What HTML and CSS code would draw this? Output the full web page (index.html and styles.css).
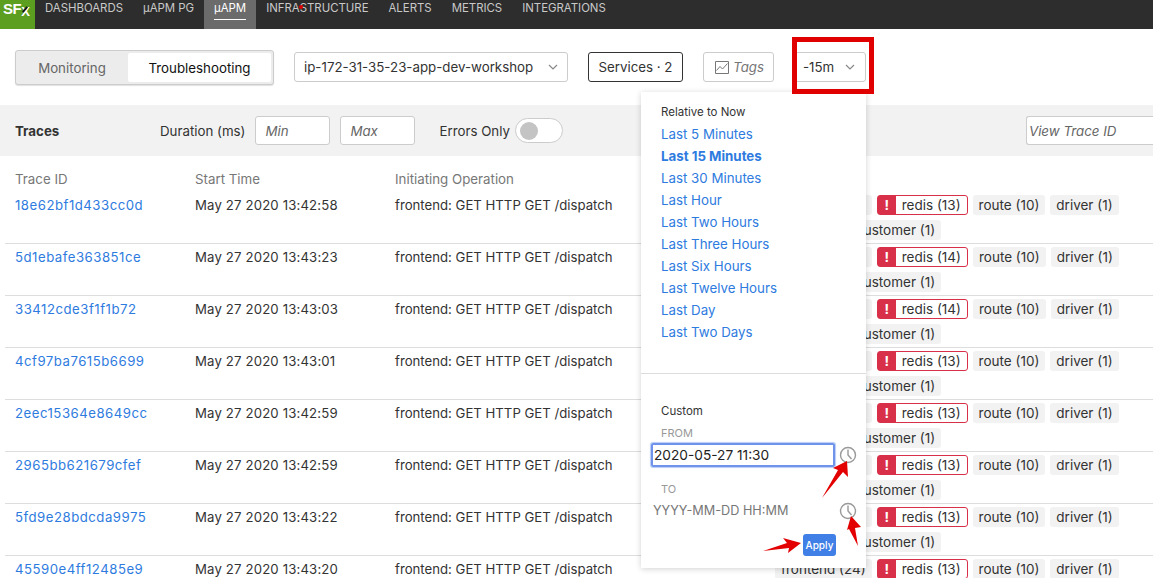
FILE: index.html
```html
<!DOCTYPE html>
<html lang="en">
<head>
<meta charset="UTF-8">
<meta name="viewport" content="width=device-width, initial-scale=1.0">
<title>Traces</title>
<link rel="stylesheet" href="styles.css">
</head>
<body>

<nav class="topnav">
    <div class="logo">SF<span class="logo-x">X</span></div>
    <a class="nav-item">DASHBOARDS</a>
    <a class="nav-item">µAPM PG</a>
    <a class="nav-item active"><span>µAPM</span></a>
    <a class="nav-item">INFRASTRUCTURE</a>
    <a class="nav-item">ALERTS</a>
    <a class="nav-item">METRICS</a>
    <a class="nav-item">INTEGRATIONS</a>
</nav>

<div class="toolbar">
    <div class="segment">
        <div class="segment-item">Monitoring</div>
        <div class="segment-item selected">Troubleshooting</div>
    </div>
    <div class="tool-btn env-select">
        <span>ip-172-31-35-23-app-dev-workshop</span>
        <svg class="chevron" viewBox="0 0 10 6"><path d="M1 1l4 4 4-4"/></svg>
    </div>
    <div class="tool-btn services">Services · 2</div>
    <div class="tool-btn tags">
        <svg class="tags-icon" viewBox="0 0 14 13"><path d="M.5.5h13v12H.5z"/><path d="M1.500 9.500l3.500-4 2.500 2.500 5-5.500"/></svg>
        <em>Tags</em>
    </div>
    <div class="tool-btn time">
        <span>-15m</span>
        <svg class="chevron" viewBox="0 0 10 6"><path d="M1 1l4 4 4-4"/></svg>
    </div>
</div>

<div class="filterbar">
    <strong class="filter-title">Traces</strong>
    <span class="filter-label">Duration (ms)</span>
    <div class="filter-input">Min</div>
    <div class="filter-input">Max</div>
    <span class="filter-label errors">Errors Only</span>
    <div class="toggle"><div class="toggle-knob"></div></div>
    <div class="filter-input trace-search">View Trace ID</div>
</div>

<div class="traces">
    <div class="trace-head">
        <div>Trace ID</div>
        <div>Start Time</div>
        <div>Initiating Operation</div>
    </div>

    <div class="trace-row">
        <a class="trace-id">18e62bf1d433cc0d</a>
        <div class="start-time">May 27 2020 13:42:58</div>
        <div>frontend: GET HTTP GET /dispatch</div>
        <div class="tag-list">
            <span class="tag">frontend (24)</span>
            <span class="tag error"><b>!</b>redis (13)</span>
            <span class="tag">route (10)</span>
            <span class="tag">driver (1)</span>
            <span class="tag blank"></span>
            <span class="tag">customer (1)</span>
        </div>
    </div>
    <div class="trace-row">
        <a class="trace-id">5d1ebafe363851ce</a>
        <div class="start-time">May 27 2020 13:43:23</div>
        <div>frontend: GET HTTP GET /dispatch</div>
        <div class="tag-list">
            <span class="tag">frontend (24)</span>
            <span class="tag error"><b>!</b>redis (14)</span>
            <span class="tag">route (10)</span>
            <span class="tag">driver (1)</span>
            <span class="tag blank"></span>
            <span class="tag">customer (1)</span>
        </div>
    </div>
    <div class="trace-row">
        <a class="trace-id">33412cde3f1f1b72</a>
        <div class="start-time">May 27 2020 13:43:03</div>
        <div>frontend: GET HTTP GET /dispatch</div>
        <div class="tag-list">
            <span class="tag">frontend (24)</span>
            <span class="tag error"><b>!</b>redis (14)</span>
            <span class="tag">route (10)</span>
            <span class="tag">driver (1)</span>
            <span class="tag blank"></span>
            <span class="tag">customer (1)</span>
        </div>
    </div>
    <div class="trace-row">
        <a class="trace-id">4cf97ba7615b6699</a>
        <div class="start-time">May 27 2020 13:43:01</div>
        <div>frontend: GET HTTP GET /dispatch</div>
        <div class="tag-list">
            <span class="tag">frontend (24)</span>
            <span class="tag error"><b>!</b>redis (13)</span>
            <span class="tag">route (10)</span>
            <span class="tag">driver (1)</span>
            <span class="tag blank"></span>
            <span class="tag">customer (1)</span>
        </div>
    </div>
    <div class="trace-row">
        <a class="trace-id">2eec15364e8649cc</a>
        <div class="start-time">May 27 2020 13:42:59</div>
        <div>frontend: GET HTTP GET /dispatch</div>
        <div class="tag-list">
            <span class="tag">frontend (24)</span>
            <span class="tag error"><b>!</b>redis (13)</span>
            <span class="tag">route (10)</span>
            <span class="tag">driver (1)</span>
            <span class="tag blank"></span>
            <span class="tag">customer (1)</span>
        </div>
    </div>
    <div class="trace-row">
        <a class="trace-id">2965bb621679cfef</a>
        <div class="start-time">May 27 2020 13:42:59</div>
        <div>frontend: GET HTTP GET /dispatch</div>
        <div class="tag-list">
            <span class="tag">frontend (24)</span>
            <span class="tag error"><b>!</b>redis (13)</span>
            <span class="tag">route (10)</span>
            <span class="tag">driver (1)</span>
            <span class="tag blank"></span>
            <span class="tag">customer (1)</span>
        </div>
    </div>
    <div class="trace-row">
        <a class="trace-id">5fd9e28bdcda9975</a>
        <div class="start-time">May 27 2020 13:43:22</div>
        <div>frontend: GET HTTP GET /dispatch</div>
        <div class="tag-list">
            <span class="tag">frontend (24)</span>
            <span class="tag error"><b>!</b>redis (13)</span>
            <span class="tag">route (10)</span>
            <span class="tag">driver (1)</span>
            <span class="tag blank"></span>
            <span class="tag">customer (1)</span>
        </div>
    </div>
    <div class="trace-row">
        <a class="trace-id">45590e4ff12485e9</a>
        <div class="start-time">May 27 2020 13:43:20</div>
        <div>frontend: GET HTTP GET /dispatch</div>
        <div class="tag-list">
            <span class="tag">frontend (24)</span>
            <span class="tag error"><b>!</b>redis (13)</span>
            <span class="tag">route (10)</span>
            <span class="tag">driver (1)</span>
        </div>
    </div>
</div>

<!-- time picker dropdown -->
<div class="time-menu">
    <div class="menu-relative">
        <div class="menu-title">Relative to Now</div>
        <a class="menu-link">Last 5 Minutes</a>
        <a class="menu-link current">Last 15 Minutes</a>
        <a class="menu-link">Last 30 Minutes</a>
        <a class="menu-link">Last Hour</a>
        <a class="menu-link">Last Two Hours</a>
        <a class="menu-link">Last Three Hours</a>
        <a class="menu-link">Last Six Hours</a>
        <a class="menu-link">Last Twelve Hours</a>
        <a class="menu-link">Last Day</a>
        <a class="menu-link">Last Two Days</a>
    </div>
    <div class="menu-custom">
        <div class="menu-title">Custom</div>
        <div class="field-label">FROM</div>
        <div class="field-row">
            <div class="date-input focused">2020-05-27 11:30</div>
            <svg class="clock" viewBox="0 0 18 18"><circle cx="9" cy="9" r="7.500"/><path d="M9 3.500V9l3.500 4"/></svg>
        </div>
        <div class="field-label to">TO</div>
        <div class="field-row">
            <div class="date-input empty">YYYY-MM-DD HH:MM</div>
            <svg class="clock" viewBox="0 0 18 18"><circle cx="9" cy="9" r="7.500"/><path d="M9 3.500V9l3.500 4"/></svg>
        </div>
        <div class="apply-row"><button class="apply">Apply</button></div>
    </div>
</div>

<!-- screenshot annotations -->
<div class="callout"></div>
<div class="cursor-dot"></div>
<svg class="arrows" viewBox="0 0 1153 578">
    <path d="M822 498L838 470 833 468 847 461 848 477 843 472z"/>
    <path d="M858 546L849 529 847 530 851 516 861 527 855 528z"/>
    <path d="M763 551L787 543 783 538 801 543 788 553 789 548z"/>
</svg>

</body>
</html>
```

FILE: styles.css
```css
html, body {
    height: 100%;
}

body {
    display: flex;
    flex-direction: column;
    margin: 0;
    overflow: hidden;
    background-color: #fff;
    color: #333;
    font-family: Inter, "Liberation Sans", sans-serif;
    font-size: 13.3px;
}

.topnav {
    display: flex;
    flex: none;
    height: 29px;
    background-color: #2d2d2d;
}

.logo {
    position: relative;
    width: 35px;
    height: 29px;
    padding-left: 3px;
    box-sizing: border-box;
    background-color: #5b9e20;
    color: #fff;
    font-family: "Liberation Sans", sans-serif;
    font-size: 15px;
    font-weight: 700;
    line-height: 18px;
    letter-spacing: -0.5px;
}

/* the black stroke of the X */
.logo::after {
    content: "";
    position: absolute;
    top: 6px;
    left: 24px;
    width: 2px;
    height: 7px;
    background-color: #1a1a1a;
    transform: rotate(40deg);
}

.logo-x {
    position: relative;
    top: 2px;
    font-size: 13px;
}

.nav-item {
    padding: 0 10px;
    color: #c9c9c9;
    font-size: 11.4px;
    line-height: 16px;
}

.nav-item.active {
    background-color: #6b6b6b;
    color: #fff;
}

.nav-item.active span {
    display: block;
    height: 19px;
    border-bottom: 1px solid #fff;
}

.toolbar {
    display: flex;
    flex: none;
    align-items: center;
    height: 76px;
    padding: 0 0 0 15px;
    box-sizing: border-box;
}

.segment {
    display: flex;
    width: 259px;
    height: 35px;
    padding: 2px 2px 2px 3px;
    box-sizing: border-box;
    border: 1px solid #ccc;
    border-radius: 3px;
    background-color: #ececec;
    box-shadow: 0 1px 1px rgba(0, 0, 0, 0.12);
}

.segment-item {
    display: flex;
    align-items: center;
    justify-content: center;
    width: 109px;
    padding: 1px 3px 0 0;
    box-sizing: border-box;
    color: #666;
}

.segment-item.selected {
    flex: 1;
    padding-right: 0;
    background-color: #fff;
    border-radius: 2px;
    color: #111;
}

.tool-btn {
    display: flex;
    align-items: center;
    flex: none;
    height: 30px;
    margin-left: 20px;
    box-sizing: border-box;
    border: 1px solid #ccc;
    border-radius: 3px;
}

.env-select {
    justify-content: space-between;
    width: 274px;
    padding: 0 9px;
}

.services {
    justify-content: center;
    width: 95px;
    border-color: #333;
}

.tags {
    justify-content: flex-end;
    width: 71px;
    padding-right: 9px;
    color: #777;
}

.tags-icon {
    width: 14px;
    height: 13px;
    margin-right: 4px;
    fill: none;
    stroke: #777;
    stroke-width: 1;
}

.time {
    justify-content: space-between;
    width: 72px;
    padding: 0 10px 0 8px;
}

.chevron {
    width: 10px;
    height: 6px;
    fill: none;
    stroke: #888;
    stroke-width: 1.2;
}

.filterbar {
    display: flex;
    flex: none;
    align-items: center;
    height: 51px;
    padding-left: 15px;
    background-color: #f2f2f2;
}

.filter-title {
    width: 145px;
    color: #333;
}

.filter-input {
    flex: none;
    width: 75px;
    height: 29px;
    margin-left: 10px;
    padding-left: 9px;
    box-sizing: border-box;
    border: 1px solid #ccc;
    border-radius: 3px;
    background-color: #fff;
    color: #666;
    font-style: italic;
    line-height: 28px;
}

.filter-label {
    color: #333;
}

.errors {
    margin-left: 24px;
}

.toggle {
    width: 48px;
    height: 25px;
    margin-left: 5px;
    padding: 3px 4px;
    box-sizing: border-box;
    border: 1px solid #ccc;
    border-radius: 13px;
    background-color: #fff;
}

.toggle-knob {
    width: 18px;
    height: 18px;
    border-radius: 50%;
    background-color: #c4c4c4;
}

.trace-search {
    flex: 1;
    margin-left: 463px;
    padding-left: 2px;
    border-right: 0;
    border-radius: 3px 0 0 3px;
}

.traces {
    flex: 1;
    min-height: 0;
    overflow: hidden;
    padding-left: 5px;
}

.trace-head,
.trace-row {
    display: grid;
    grid-template-columns: 180px 200px 380px 1fr;
    padding-left: 10px;
}

.trace-head {
    height: 36px;
    align-items: center;
    padding-top: 10px;
    box-sizing: border-box;
    color: #777;
}

.trace-row {
    height: 52px;
    padding-top: 3px;
    box-sizing: border-box;
    border-bottom: 1px solid #ddd;
    font-size: 13.2px;
    line-height: 20px;
}

.trace-id {
    color: #2e7be0;
    letter-spacing: 0.5px;
}

.start-time {
    letter-spacing: 0.15px;
}

.tag-list {
    display: flex;
    flex-wrap: wrap;
    align-content: flex-start;
    gap: 5px;
    font-size: 13.5px;
}

.tag {
    display: flex;
    height: 20px;
    padding: 0 6px;
    box-sizing: border-box;
    border-radius: 3px;
    background-color: #f2f2f2;
    white-space: nowrap;
}

.tag.blank {
    width: 70px;
    background-color: transparent;
}

.tag.error {
    padding: 0 6px 0 0;
    border: 1px solid #d9304a;
    background-color: #fff;
    line-height: 18px;
}

.tag.error b {
    width: 18px;
    margin-right: 6px;
    background-color: #d9304a;
    color: #fff;
    text-align: center;
}

.time-menu {
    position: absolute;
    top: 92px;
    left: 641px;
    width: 225px;
    height: 476px;
    background-color: #fff;
    box-shadow: 0 1px 6px rgba(0, 0, 0, 0.18);
}

.menu-relative {
    height: 282px;
    padding: 11px 20px 0;
    box-sizing: border-box;
    border-bottom: 1px solid #ddd;
}

.menu-title {
    font-size: 11.5px;
    line-height: 18px;
}

.menu-link {
    display: block;
    color: #2e7be0;
    line-height: 22px;
}

.menu-link.current {
    font-weight: 700;
}

.menu-relative .menu-title {
    margin-bottom: 2px;
}

.menu-custom {
    padding-top: 28px;
}

.menu-custom .menu-title {
    margin-left: 20px;
}

.field-label {
    margin: 6px 0 0 20px;
    color: #999;
    font-size: 11px;
    line-height: 14px;
}

.field-label.to {
    margin-top: 15px;
}

.field-row {
    display: flex;
    align-items: center;
    margin-top: 3px;
    padding-left: 10px;
}

.date-input {
    width: 184px;
    height: 24px;
    padding-left: 2px;
    box-sizing: border-box;
    font-size: 12.7px;
    line-height: 24px;
}

.date-input.focused {
    border: 2px solid #6f92ea;
    border-radius: 2px;
    padding-left: 1px;
    box-shadow: 0 0 1px 1px #b9cdf6;
    color: #222;
    font-size: 13.7px;
    line-height: 20px;
}

.date-input.empty {
    color: #777;
}

.clock {
    width: 18px;
    height: 18px;
    margin-left: 4px;
    fill: none;
    stroke: #999;
    stroke-width: 1.4;
}

.apply-row {
    display: flex;
    justify-content: flex-end;
    margin: 11px 30px 0 0;
}

.apply {
    width: 33px;
    height: 22px;
    padding: 0;
    border: 0;
    border-radius: 3px;
    background-color: #3f7fe6;
    color: #fff;
    font-family: inherit;
    font-size: 10px;
    font-weight: 500;
}

.callout {
    position: absolute;
    top: 37px;
    left: 792px;
    width: 82px;
    height: 57px;
    box-sizing: border-box;
    border: 5px solid #e00000;
}

.cursor-dot {
    position: absolute;
    top: 5px;
    left: 299px;
    width: 4px;
    height: 4px;
    border-radius: 50%;
    background-color: #e00000;
}

.arrows {
    position: absolute;
    top: 0;
    left: 0;
    width: 1153px;
    height: 578px;
    fill: #e30000;
    pointer-events: none;
}
```
